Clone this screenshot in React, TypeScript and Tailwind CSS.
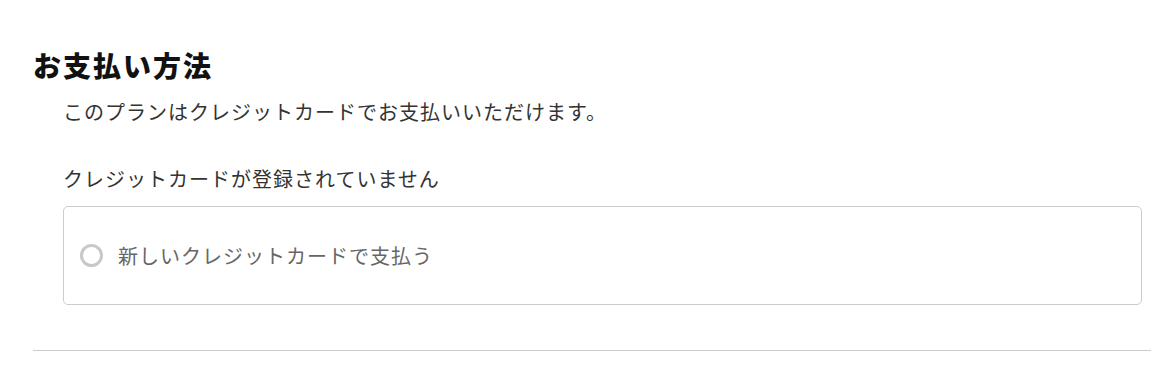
import React from "react";

export default function App() {
  const font = { fontFamily: '"Noto Sans CJK JP", "Noto Sans", sans-serif' };
  return (
    <div className="w-[1151px] h-[379px] bg-white overflow-hidden" style={font}>
      <div className="pl-[33px] pt-[47px]">
        <h2 className="text-[28px] leading-[36px] font-black tracking-[2px] text-[#111]">お支払い方法</h2>
        <div className="pl-[30px] pr-[9px]">
          <p className="mt-[14px] text-[20px] leading-[30px] tracking-[1px] text-[#333]">
            このプランはクレジットカードでお支払いいただけます。
          </p>
          <p className="mt-[37px] text-[20px] leading-[30px] tracking-[1px] text-[#333]">
            クレジットカードが登録されていません
          </p>
          <div className="mt-[12px] h-[99px] rounded-[5px] border border-[#cccccc] flex items-center pl-[16px]">
            <span className="w-[23px] h-[23px] rounded-full border-[3px] border-[#c8c8c8] shrink-0" />
            <span className="ml-[15px] text-[20px] leading-[30px] tracking-[1px] text-[#666]">
              新しいクレジットカードで支払う
            </span>
          </div>
        </div>
        <div className="mt-[45px] border-t border-[#cccccc]" />
      </div>
    </div>
  );
}
